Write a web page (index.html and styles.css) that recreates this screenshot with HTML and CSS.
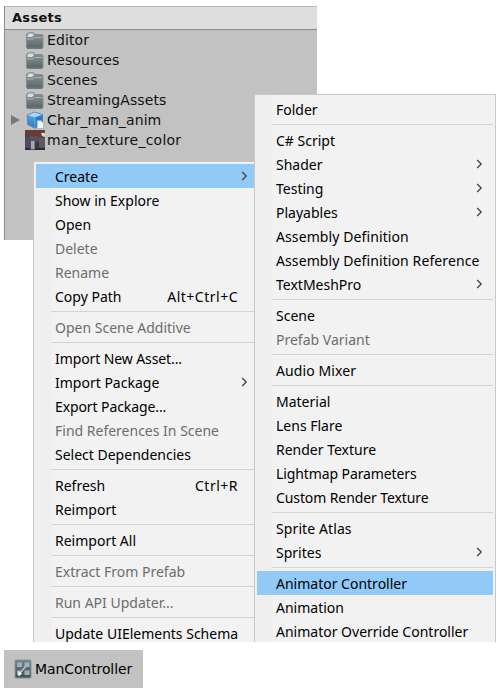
FILE: index.html
```html
<!DOCTYPE html>
<html lang="en">
<head>
<meta charset="utf-8">
<title>Assets</title>
<link rel="stylesheet" href="styles.css">
</head>
<body>
<svg class="defs" width="0" height="0" aria-hidden="true">
  <defs>
    <linearGradient id="fold" x1="0" y1="0" x2="0" y2="1"><stop offset="0" stop-color="#8f9a9b"/><stop offset="1" stop-color="#56656a"/></linearGradient>
    <linearGradient id="ctl" x1="0" y1="0" x2="0" y2="1"><stop offset="0" stop-color="#75848b"/><stop offset="1" stop-color="#3e5058"/></linearGradient>
    <linearGradient id="side" x1="0" y1="0" x2="0" y2="1"><stop offset="0" stop-color="#64acea"/><stop offset="1" stop-color="#2879c4"/></linearGradient>
    <symbol id="folder" viewBox="0 0 20 20">
      <path d="M1.5 17V5Q1.5 3.5 3 3.5L4 2.8H8.5L9.5 4.5H16.5Q18 4.5 18 6V17Q18 18 17 18H2.5Q1.5 18 1.5 17Z" fill="url(#fold)" stroke="#858c8d"/>
      <path d="M2.5 7V5L4.2 3.5H8L8.8 5.2 7 7Z" fill="#dde0e0"/>
      <path d="M9 6H17" stroke="#778384"/>
      <path d="M2 9H8L9.5 7.5H17.5" fill="none" stroke="#aab3b3"/>
      <path d="M2 18.2H17.5" stroke="#5c6769"/>
    </symbol>
    <symbol id="arrow" viewBox="0 0 7 10"><path d="M1.2 1 5.2 5 1.2 9" fill="none" stroke="#444" stroke-width="1.3"/></symbol>
  </defs>
</svg>
<main class="canvas">
  <section class="assets">
    <h1 class="assets-title">Assets</h1>
    <ul class="tree">
      <li class="node"><svg class="icon"><use href="#folder"/></svg>Editor</li>
      <li class="node"><svg class="icon"><use href="#folder"/></svg>Resources</li>
      <li class="node"><svg class="icon"><use href="#folder"/></svg>Scenes</li>
      <li class="node"><svg class="icon"><use href="#folder"/></svg>StreamingAssets</li>
      <li class="node has-children"><svg class="icon" viewBox="0 0 20 20"><path d="M2.2 5 9.5 2 17.5 4.5V14L10 18.2 2.7 14.5Z" fill="url(#side)" stroke="#477ba8" stroke-width=".8"/><path d="M2.7 5.2 9.5 2.5 17 4.8 10 7.5Z" fill="#a8d5f5"/><path d="M10 7.5 17.3 4.9V13.8L10 18Z" fill="#277bc8"/><path d="M10 7.5V18" stroke="#8ac3ef" stroke-width=".7"/><path d="M12.2 10.5H16L18.5 13V18.5H12.2Z" fill="#f4f7f9" stroke="#8d9da9" stroke-width=".6"/></svg>Char_man_anim</li>
      <li class="node"><svg class="icon texture" viewBox="0 0 20 20"><path d="M0 0H20V20H0Z" fill="#514a57"/><path d="M0 0H18V5L13 7 0 8Z" fill="#6c3a31"/><path d="M0 5H5L4 8 0 9Z" fill="#414954"/><path d="M16 3H20V7L17 6Z" fill="#ddd3cf"/><path d="M0 8H5V18H0Z" fill="#51475e"/><path d="M5 6H13V11H5Z" fill="#59515c"/><path d="M6 11H9.5V19H6Z" fill="#a4a7b6"/><path d="M10 12H15V19H10Z" fill="#3c3b3d"/><path d="M14 8H20V17H14Z" fill="#635762"/><path d="M0 18H5V20H0ZM10 18H20V20H10Z" fill="#302b2c"/></svg><span class="wide">man_texture_color</span></li>
    </ul>
  </section>

  <ul class="menu context">
    <li class="item active">Create<svg class="arrow"><use href="#arrow"/></svg></li>
    <li class="item">Show in Explore</li>
    <li class="item">Open</li>
    <li class="item disabled">Delete</li>
    <li class="item disabled">Rename</li>
    <li class="item">Copy Path<span class="key">Alt+Ctrl+C</span></li>
    <li class="sep"></li>
    <li class="item disabled">Open Scene Additive</li>
    <li class="sep"></li>
    <li class="item tight">Import New Asset...</li>
    <li class="item">Import Package<svg class="arrow"><use href="#arrow"/></svg></li>
    <li class="item tight">Export Package...</li>
    <li class="item disabled">Find References In Scene</li>
    <li class="item">Select Dependencies</li>
    <li class="sep"></li>
    <li class="item">Refresh<span class="key">Ctrl+R</span></li>
    <li class="item">Reimport</li>
    <li class="sep"></li>
    <li class="item">Reimport All</li>
    <li class="sep"></li>
    <li class="item disabled">Extract From Prefab</li>
    <li class="sep"></li>
    <li class="item disabled">Run API Updater...</li>
    <li class="sep"></li>
    <li class="item">Update UIElements Schema</li>
  </ul>

  <ul class="menu create">
    <li class="item">Folder</li>
    <li class="sep"></li>
    <li class="item">C# Script</li>
    <li class="item">Shader<svg class="arrow"><use href="#arrow"/></svg></li>
    <li class="item">Testing<svg class="arrow"><use href="#arrow"/></svg></li>
    <li class="item">Playables<svg class="arrow"><use href="#arrow"/></svg></li>
    <li class="item loose">Assembly Definition</li>
    <li class="item loose">Assembly Definition Reference</li>
    <li class="item">TextMeshPro<svg class="arrow"><use href="#arrow"/></svg></li>
    <li class="sep"></li>
    <li class="item">Scene</li>
    <li class="item disabled">Prefab Variant</li>
    <li class="sep"></li>
    <li class="item loose">Audio Mixer</li>
    <li class="sep"></li>
    <li class="item">Material</li>
    <li class="item">Lens Flare</li>
    <li class="item">Render Texture</li>
    <li class="item tight">Lightmap Parameters</li>
    <li class="item tight">Custom Render Texture</li>
    <li class="sep"></li>
    <li class="item loose">Sprite Atlas</li>
    <li class="item">Sprites<svg class="arrow"><use href="#arrow"/></svg></li>
    <li class="sep"></li>
    <li class="item active">Animator Controller</li>
    <li class="item">Animation</li>
    <li class="item">Animator Override Controller</li>
  </ul>

  <div class="controller">
    <svg class="controller-icon" viewBox="0 0 18 20"><rect x="1" y="1" width="16" height="18" rx="1" fill="url(#ctl)" stroke="#899296"/><path d="M3 3.5H8V8H3ZM10.5 3.5H15.5V8H10.5ZM10.5 11.5H15.5V16H10.5ZM3 11.5H7V16H3Z" fill="#9fb1ba"/><path d="M7 13 12 7" stroke="#b9c6cc" stroke-width="1.4"/><path d="M4.5 12 8 14.5 4.5 17.5Z" fill="#fff"/></svg>
    ManController
  </div>
</main>
</body>
</html>
```
FILE: styles.css
```css
* { box-sizing: border-box; }

body { margin: 0; background: #fff; }

ul { list-style: none; margin: 0; padding: 0; }

.defs { position: absolute; }

.canvas {
  position: relative;
  width: 500px;
  height: 695px;
  overflow: hidden;
  padding: 6px 4px 7px;
  display: flex;
  flex-direction: column;
  justify-content: space-between;
  align-items: flex-start;
}

.assets {
  width: 313px;
  height: 234px;
  background: #c2c2c2;
  border-left: 1px solid #8c8c8c;
  border-top: 1px solid #b8b8b8;
  font: 14px/20px "DejaVu Sans", sans-serif;
  letter-spacing: 0.1px;
  color: #111;
}

.assets-title {
  margin: 0;
  height: 23px;
  padding-left: 7px;
  background: #dedede;
  border-bottom: 1px solid #8b8b8b;
  font: bold 13px/21px "DejaVu Sans", sans-serif;
  letter-spacing: 0.3px;
}

.node {
  position: relative;
  display: flex;
  align-items: center;
  height: 20px;
  padding-left: 20px;
  gap: 2px;
}

.icon { width: 20px; height: 20px; flex: none; }
.wide { letter-spacing: 0.25px; }

.has-children::before {
  content: "";
  position: absolute;
  left: 6px;
  top: 5px;
  border-left: 9px solid #777;
  border-top: 5.5px solid transparent;
  border-bottom: 5.5px solid transparent;
}

.menu {
  position: absolute;
  background: linear-gradient(90deg, #efefef 17px, #f2f2f2 18px);
  border: 1px solid #c8c8c8;
  border-bottom: 0;
  padding: 2px;
  overflow: hidden;
  font: 14px/24px "Noto Sans", sans-serif;
  color: #000;
}

.context { left: 33px; top: 161px; width: 222px; height: 481px; padding-right: 0; }
.create { left: 254px; top: 94px; width: 242px; height: 548px; }

.item {
  display: flex;
  align-items: center;
  justify-content: space-between;
  height: 24px;
  padding: 2px 10px 0 19px;
  white-space: nowrap;
}

.context .item { padding-right: 6px; }
.active { background: #91c9f7; }
.disabled { color: #6d6d6d; }
.tight { letter-spacing: -0.1px; }
.loose { letter-spacing: 0.1px; }
.key { margin-right: 10px; letter-spacing: 0.5px; }
.arrow { width: 7px; height: 10px; flex: none; margin-bottom: 2px; }

.sep {
  height: 7px;
  margin-left: 15px;
  padding-top: 3px;
}

.sep::before {
  content: "";
  display: block;
  height: 1px;
  background: #d3d3d3;
}

.controller {
  width: 139px;
  height: 38px;
  display: flex;
  align-items: center;
  gap: 3px;
  padding-left: 10px;
  background: #c2c2c2;
  font: 14px/20px "DejaVu Sans", sans-serif;
  letter-spacing: -0.1px;
  color: #000;
}

.controller-icon { width: 18px; height: 20px; flex: none; }
```
